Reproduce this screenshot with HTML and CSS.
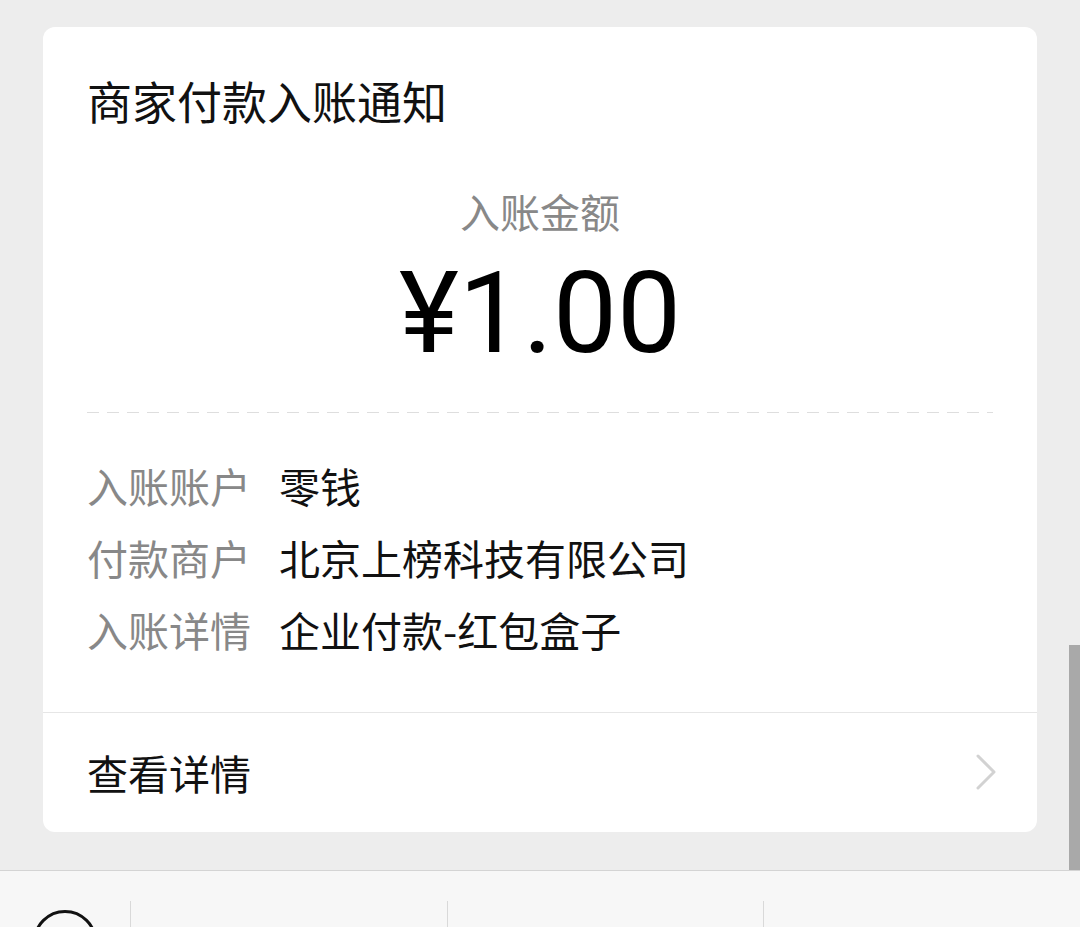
FILE: index.html
```html
<!DOCTYPE html>
<html lang="zh-CN">
<head>
  <meta charset="UTF-8" />
  <meta name="viewport" content="width=device-width, initial-scale=1.0"/>
  <title>商家付款入账通知</title>
  <link rel="stylesheet" href="styles.css">
</head>
<body>

  <div class="page">
    <div class="card">
      <div class="card-body">
        <div class="title">商家付款入账通知</div>
        <div class="amount-label">入账金额</div>
        <div class="amount">¥1.00</div>
        <div class="dash"></div>

        <div class="rows">
          <div class="row">
            <span class="label">入账账户</span>
            <span class="value">零钱</span>
          </div>
          <div class="row">
            <span class="label">付款商户</span>
            <span class="value">北京上榜科技有限公司</span>
          </div>
          <div class="row">
            <span class="label">入账详情</span>
            <span class="value">企业付款-红包盒子</span>
          </div>
        </div>
      </div>

      <div class="card-footer">
        <span>查看详情</span>
        <svg class="chevron" width="22" height="36" viewBox="0 0 22 36">
          <path d="M3 2 L19 18 L3 34" fill="none" stroke="#d2d2d2" stroke-width="3" stroke-linecap="round" stroke-linejoin="round"/>
        </svg>
      </div>
    </div>

    <div class="tabbar">
      <div class="tab-key"><div class="circle"></div></div>
      <div class="tab"></div>
      <div class="tab"></div>
      <div class="tab"></div>
    </div>

    <div class="scrollbar"></div>
  </div>

</body>
</html>
```

FILE: styles.css
```css
body {
  margin: 0;
  background-color: #ededed;
  color: #111;
  font-family: "Noto Sans CJK SC", "Noto Sans", sans-serif;
}

.page {
  position: relative;
  height: 927px;
  overflow: hidden;
  display: flex;
  flex-direction: column;
}

.card {
  margin: 27px 43px 0;
  background-color: #fff;
  border-radius: 12px;
  overflow: hidden;
}

.card-body {
  padding: 0 44px;
}

.title {
  padding-top: 44px;
  font-size: 45px;
  line-height: 60px;
}

.amount-label {
  margin-top: 52px;
  font-size: 40px;
  line-height: 56px;
  color: #888;
  text-align: center;
}

.amount {
  margin-top: 19px;
  font-family: Roboto, "Liberation Sans", sans-serif;
  font-size: 114px;
  line-height: 110px;
  text-align: center;
  color: #000;
}

.dash {
  margin-top: 44px;
  height: 1px;
  background: repeating-linear-gradient(to right, #dedede 0 12px, transparent 12px 20px);
}

.rows {
  padding: 36px 0 47px;
}

.row {
  display: flex;
  font-size: 41px;
  line-height: 72px;
}

.label {
  width: 192px;
  color: #888;
}

.card-footer {
  border-top: 1px solid #e6e6e6;
  height: 120px;
  padding: 0 40px 2px 44px;
  box-sizing: border-box;
  display: flex;
  align-items: center;
  justify-content: space-between;
  font-size: 41px;
}

.tabbar {
  margin-top: auto;
  height: 56px;
  border-top: 1px solid #d4d4d4;
  background-color: #f7f7f7;
  display: grid;
  grid-template-columns: 130px repeat(3, 1fr);
}

.tab-key {
  padding: 39px 0 0 33px;
}

.circle {
  width: 58px;
  height: 58px;
  border: 3px solid #111;
  border-radius: 50%;
}

.tab {
  margin-top: 30px;
  border-left: 1px solid #d9d9d9;
}

.scrollbar {
  position: absolute;
  right: 0;
  top: 645px;
  width: 11px;
  height: 225px;
  background-color: #a9a9a9;
}
```
